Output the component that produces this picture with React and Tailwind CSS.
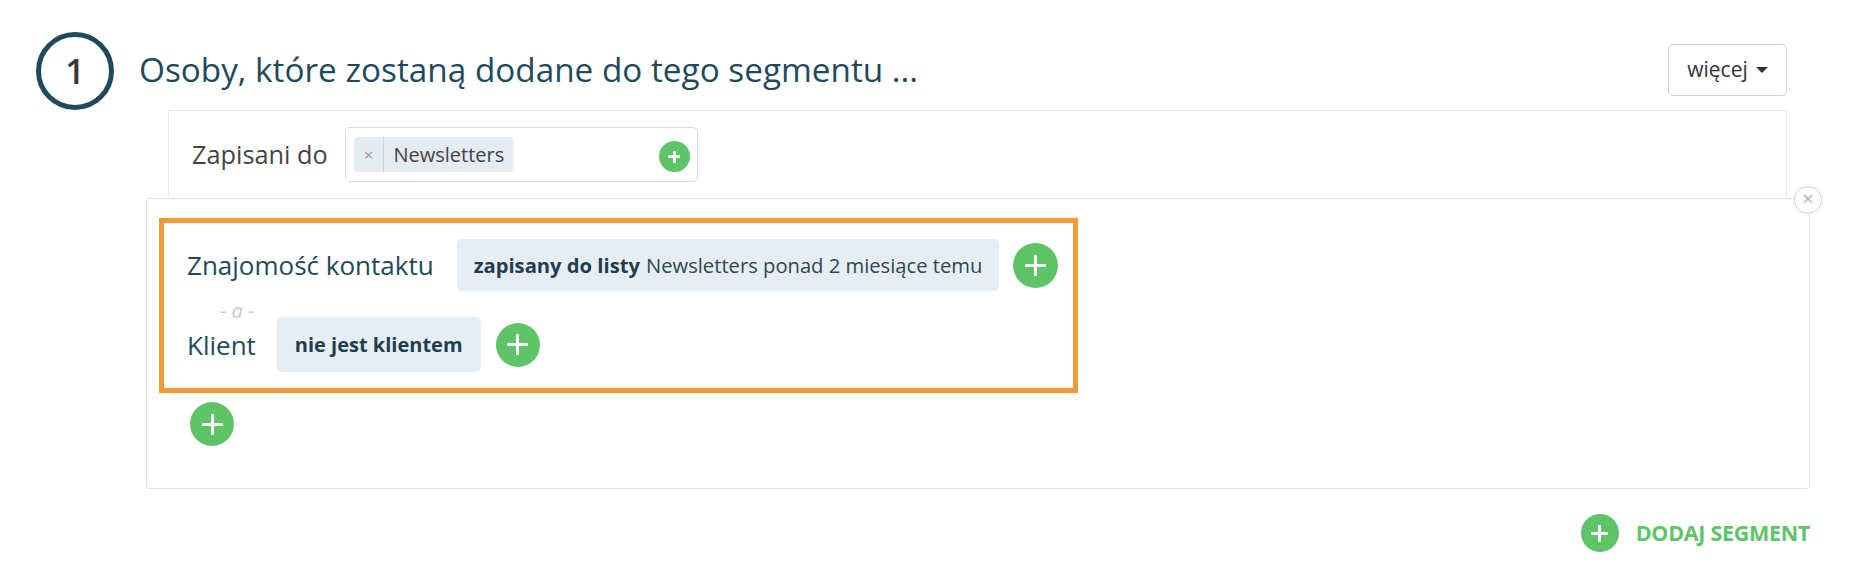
import React from "react";

function Plus({ box, hbar, vbar }) {
  return (
    <span className={`${box} shrink-0 rounded-full bg-[#5fc368] flex items-center justify-center relative`}>
      <span className={`${hbar} bg-white absolute rounded-[1px]`} />
      <span className={`${vbar} bg-white absolute rounded-[1px]`} />
    </span>
  );
}

export default function App() {
  return (
    <div className="w-[1872px] h-[576px] bg-white overflow-hidden font-['Open_Sans',sans-serif]">
      <div className="pl-[36px] pr-[85px] pt-[32px]">
        {/* header */}
        <div className="flex items-start h-[78px]">
          <div className="w-[78px] h-[78px] shrink-0 rounded-full border-[5px] border-[#1f4a5e] flex items-center justify-center">
            <span className="text-[34px] leading-none font-semibold text-[#383838]">1</span>
          </div>
          <h1 className="ml-[25px] mt-[21px] text-[33.3px] leading-[33px] font-normal text-[#1f4a5d]">
            Osoby, które zostaną dodane do tego segmentu ...
          </h1>
          <button className="ml-auto mt-[12px] w-[119px] h-[52px] border border-[#cfcfcf] rounded-[5px] bg-white flex items-center justify-center gap-[8px] text-[21px] text-[#333]">
            <span className="leading-none -mt-[2px]">więcej</span>
            <span className="w-0 h-0 border-x-[6px] border-x-transparent border-t-[6px] border-t-[#333]" />
          </button>
        </div>

        {/* panel 1 */}
        <div className="ml-[132px] h-[88px] border-t border-x border-[#e6e6e6] flex items-center pl-[23px]">
          <span className="text-[25.3px] text-[#444] leading-none">Zapisani do</span>
          <div className="ml-[17px] w-[353px] h-[55px] border border-[#d9d9d9] rounded-[5px] flex items-center justify-between pl-[8px] pr-[7px]">
            <div className="h-[35px] bg-[#e4ebf1] rounded-[4px] flex items-center">
              <span className="px-[10px] text-[17px] text-[#9a9a9a] leading-[35px] border-r border-[#cbd5dc]">×</span>
              <span className="px-[9px] text-[20px] text-[#444] leading-none">Newsletters</span>
            </div>
            <div className="mt-[4px]">
              <Plus box="w-[31px] h-[31px]" hbar="w-[12px] h-[3px]" vbar="w-[3px] h-[12px]" />
            </div>
          </div>
        </div>

        {/* panel 2 */}
        <div className="ml-[110px] -mr-[23px] relative border border-[#e3e3e3] rounded-[3px] bg-white pt-[19px] pl-[12px] pb-[42px]">
          <span className="absolute -top-[13px] -right-[13px] w-[28px] h-[28px] rounded-full border-[1.5px] border-[#cdcdcd] bg-white flex items-center justify-center text-[#b0b0b0] text-[20px] leading-none">
            <span className="-mt-[2px]">×</span>
          </span>

          <div className="w-[919px] border-[5px] border-[#f29a3a] pl-[23px] pt-[16px] pb-[16px]">
            <div className="flex items-center h-[52px]">
              <span className="text-[26px] text-[#1f4a5d] leading-none">Znajomość kontaktu</span>
              <div className="ml-[23px] h-[52px] px-[17px] rounded-[5px] bg-[#e6edf3] flex items-center text-[20.2px] leading-none">
                <span className="font-bold text-[#1e3e4e]">zapisany do listy</span>
                <span className="ml-[6px] text-[#2c4755]">Newsletters ponad 2 miesiące temu</span>
              </div>
              <div className="ml-[14px]">
                <Plus box="w-[45px] h-[45px]" hbar="w-[21px] h-[3px]" vbar="w-[3px] h-[21px]" />
              </div>
            </div>
            <div className="h-[26px] pl-[33px]">
              <span className="block pt-[10px] text-[20px] leading-[20px] italic text-[#c9c9c9]">- a -</span>
            </div>
            <div className="flex items-center h-[55px]">
              <span className="text-[26px] text-[#1f4a5d] leading-none">Klient</span>
              <div className="ml-[21px] h-[55px] px-[18px] rounded-[5px] bg-[#e6edf3] flex items-center text-[20px] leading-none">
                <span className="font-bold text-[#1e3e4e]">nie jest klientem</span>
              </div>
              <div className="ml-[15px]">
                <Plus box="w-[44px] h-[44px]" hbar="w-[21px] h-[3px]" vbar="w-[3px] h-[21px]" />
              </div>
            </div>
          </div>

          <div className="mt-[9px] ml-[31px]">
            <Plus box="w-[44px] h-[44px]" hbar="w-[21px] h-[3px]" vbar="w-[3px] h-[21px]" />
          </div>
        </div>

        {/* add segment */}
        <div className="-mr-[23px] mt-[25px] flex items-center justify-end gap-[17px]">
          <Plus box="w-[38px] h-[38px]" hbar="w-[17px] h-[3px]" vbar="w-[3px] h-[17px]" />
          <span className="text-[21.5px] font-bold text-[#5fc368] leading-none tracking-[-0.3px]">DODAJ SEGMENT</span>
        </div>
      </div>
    </div>
  );
}
